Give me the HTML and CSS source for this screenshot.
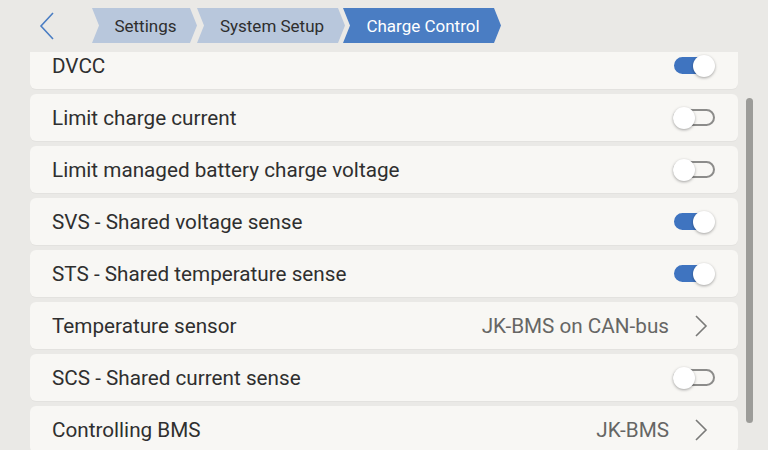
FILE: index.html
```html
<!DOCTYPE html>
<html>
<head>
<meta charset="utf-8">
<link rel="stylesheet" href="styles.css">
</head>
<body>
<div class="screen">
  <header class="topbar">
    <div class="back">
      <svg width="16" height="28" viewBox="0 0 16 28"><path d="M14 1 L2 14 L14 27" fill="none" stroke="#4a7dc3" stroke-width="1.6"/></svg>
    </div>
    <nav class="crumbs">
      <div class="crumb crumb-1">Settings</div>
      <div class="crumb crumb-2">System Setup</div>
      <div class="crumb crumb-3 active">Charge Control</div>
    </nav>
  </header>
  <div class="body">
    <div class="list">
      <div class="list-inner">
        <div class="row"><span class="label">DVCC</span><span class="toggle on"></span></div>
        <div class="row"><span class="label">Limit charge current</span><span class="toggle"></span></div>
        <div class="row"><span class="label">Limit managed battery charge voltage</span><span class="toggle"></span></div>
        <div class="row"><span class="label">SVS - Shared voltage sense</span><span class="toggle on"></span></div>
        <div class="row"><span class="label">STS - Shared temperature sense</span><span class="toggle on"></span></div>
        <div class="row nav"><span class="label">Temperature sensor</span><span class="value">JK-BMS on CAN-bus</span><svg class="chev" width="14" height="22" viewBox="0 0 14 22"><path d="M2 1 L12 11 L2 21" fill="none" stroke="#7a7a78" stroke-width="1.6"/></svg></div>
        <div class="row"><span class="label">SCS - Shared current sense</span><span class="toggle"></span></div>
        <div class="row nav"><span class="label">Controlling BMS</span><span class="value">JK-BMS</span><svg class="chev" width="14" height="22" viewBox="0 0 14 22"><path d="M2 1 L12 11 L2 21" fill="none" stroke="#7a7a78" stroke-width="1.6"/></svg></div>
      </div>
    </div>
    <div class="scrollbar"><div class="thumb"></div></div>
  </div>
</div>
</body>
</html>
```
FILE: styles.css
```css
html, body {
  margin: 0;
  padding: 0;
  background: #eae9e6;
  font-family: Roboto, "Liberation Sans", sans-serif;
}
.screen {
  width: 768px;
  height: 450px;
  overflow: hidden;
  display: flex;
  flex-direction: column;
}
.topbar {
  height: 52px;
  display: flex;
  align-items: flex-start;
  flex-shrink: 0;
}
.back {
  width: 16px;
  height: 28px;
  margin: 12px 0 0 39px;
}
.crumbs {
  display: flex;
  margin: 8px 0 0 37px;
}
.crumb {
  height: 35px;
  display: flex;
  align-items: center;
  justify-content: center;
  font-size: 17px;
  color: #2e2e2e;
  background: #b8c7dc;
  clip-path: polygon(0 0, calc(100% - 7px) 0, 100% 50%, calc(100% - 7px) 100%, 0 100%, 7px 50%);
  padding-left: 2px;
  box-sizing: border-box;
}
.crumb-1 { width: 105px; }
.crumb-2 { width: 148px; }
.crumb-3 { width: 158px; margin-left: -2px; }
.crumb.active {
  background: #4a7dc3;
  color: #ffffff;
}
.body {
  flex: 1;
  display: flex;
  min-height: 0;
}
.list {
  width: 708px;
  margin-left: 30px;
  overflow: hidden;
}
.list-inner {
  margin-top: -10px;
  display: flex;
  flex-direction: column;
  gap: 5px;
}
.row {
  height: 47px;
  flex-shrink: 0;
  background: #f8f7f4;
  border-radius: 6px;
  display: flex;
  align-items: center;
  padding: 0 23px 0 22px;
  box-sizing: border-box;
  box-shadow: 0 1px 1px rgba(0,0,0,0.03);
}
.label {
  flex: 1;
  font-size: 20.7px;
  color: #2f2f2f;
}
.value {
  font-size: 20.7px;
  color: #666664;
  margin-right: 25px;
}
.chev {
  margin-right: 7px;
}
.toggle {
  position: relative;
  width: 42px;
  height: 17px;
  box-sizing: border-box;
  border: 2px solid #8c8c8a;
  border-radius: 9px;
}
.toggle::after {
  content: "";
  position: absolute;
  width: 22px;
  height: 22px;
  border-radius: 50%;
  background: #ffffff;
  box-shadow: 0 1px 3px rgba(0,0,0,0.35);
  top: -4.5px;
  left: -2px;
}
.toggle.on {
  background: #3f74c0;
  border-color: #3f74c0;
  width: 38px;
  margin-right: 3px;
}
.toggle.on::after {
  left: auto;
  right: -5px;
}
.scrollbar {
  width: 7px;
  margin-left: 8px;
  padding-top: 46px;
}
.thumb {
  width: 7px;
  height: 325px;
  border-radius: 4px;
  background: #9c9c99;
}
```
